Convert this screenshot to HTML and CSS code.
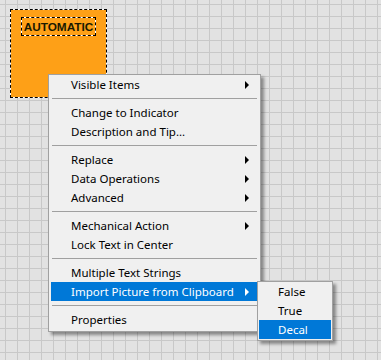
FILE: index.html
```html
<!DOCTYPE html>
<html lang="en">
<head>
    <meta charset="UTF-8">
    <title>Boolean Context Menu</title>
    <link rel="stylesheet" href="styles.css">
</head>
<body>
    <div class="canvas">
        <!-- Boolean control -->
        <div class="control-frame">
            <div class="control">
                <div class="label-frame">
                    <div class="label">AUTOMATIC</div>
                </div>
            </div>
        </div>

        <!-- Shortcut menu -->
        <div class="menu">
            <div class="item">Visible Items <span class="arrow"></span></div>
            <div class="sep"></div>
            <div class="item">Change to Indicator</div>
            <div class="item">Description and Tip...</div>
            <div class="sep"></div>
            <div class="item">Replace <span class="arrow"></span></div>
            <div class="item">Data Operations <span class="arrow"></span></div>
            <div class="item">Advanced <span class="arrow"></span></div>
            <div class="sep"></div>
            <div class="item">Mechanical Action <span class="arrow"></span></div>
            <div class="item">Lock Text in Center</div>
            <div class="sep"></div>
            <div class="item">Multiple Text Strings</div>
            <div class="item active">Import Picture from Clipboard <span class="arrow"></span>
                <div class="submenu">
                    <div class="item">False</div>
                    <div class="item">True</div>
                    <div class="item active">Decal</div>
                </div>
            </div>
            <div class="sep"></div>
            <div class="item">Properties</div>
        </div>
    </div>
</body>
</html>
```

FILE: styles.css
```css
/* Block diagram style grid */
body {
    margin: 0;
    overflow: hidden;
    height: 360px;
    background-color: #e2e2e2;
    background-image:
        linear-gradient(to right, #c8c8c8 1px, transparent 1px),
        linear-gradient(to bottom, #c8c8c8 1px, transparent 1px);
    background-size: 12px 12px;
    background-position: 5px 4px;
    font-family: "Noto Sans", "DejaVu Sans", sans-serif;
}

.canvas {
    position: relative;
    height: 360px;
    padding: 9px 0 0 10px;
    box-sizing: border-box;
}

/* Orange boolean with selection outline */
.control-frame {
    display: inline-block;
    background: #fff;
}

.control {
    width: 85px;
    height: 83px;
    border: 1px dashed #000;
    background-color: #fea017;
    background-clip: padding-box;
    padding: 4px 0 0 10px;
}

.label-frame {
    display: inline-block;
    background: #fff;
}

.label {
    width: 73px;
    height: 17px;
    border: 1px dashed #000;
    background-color: #fea017;
    background-clip: padding-box;
    font-family: "Liberation Sans", Arial, sans-serif;
    font-weight: bold;
    font-size: 11.8px;
    line-height: 18px;
    color: #1a1a00;
    text-align: center;
}

/* Menus */
.menu, .submenu {
    position: absolute;
    background: #f0f0f0;
    border: 1px solid #a0a0a0;
    box-shadow: 3px 3px 3px rgba(0, 0, 0, 0.4);
    font-size: 11.5px;
    color: #000;
}

.menu {
    left: 48px;
    top: 74px;
    width: 207px;
    padding: 0 2px 2px;
}

.item {
    position: relative;
    height: 19px;
    line-height: 19px;
    padding-left: 20px;
    display: flex;
    align-items: center;
    justify-content: space-between;
    white-space: nowrap;
}

.item.active {
    background: #0078d7;
    color: #fff;
}

.arrow {
    width: 0;
    height: 0;
    margin-right: 9px;
    border-left: 4px solid #000;
    border-top: 4px solid transparent;
    border-bottom: 4px solid transparent;
}

.active > .arrow {
    border-left-color: #fff;
}

.sep {
    height: 1px;
    margin: 4px 1px;
    background: #a0a0a0;
}

.submenu {
    left: calc(100% - 1px);
    top: -1px;
    width: 72px;
    padding: 0 1px 1px;
    color: #000;
}

.submenu .item {
    padding-left: 19px;
}
```
